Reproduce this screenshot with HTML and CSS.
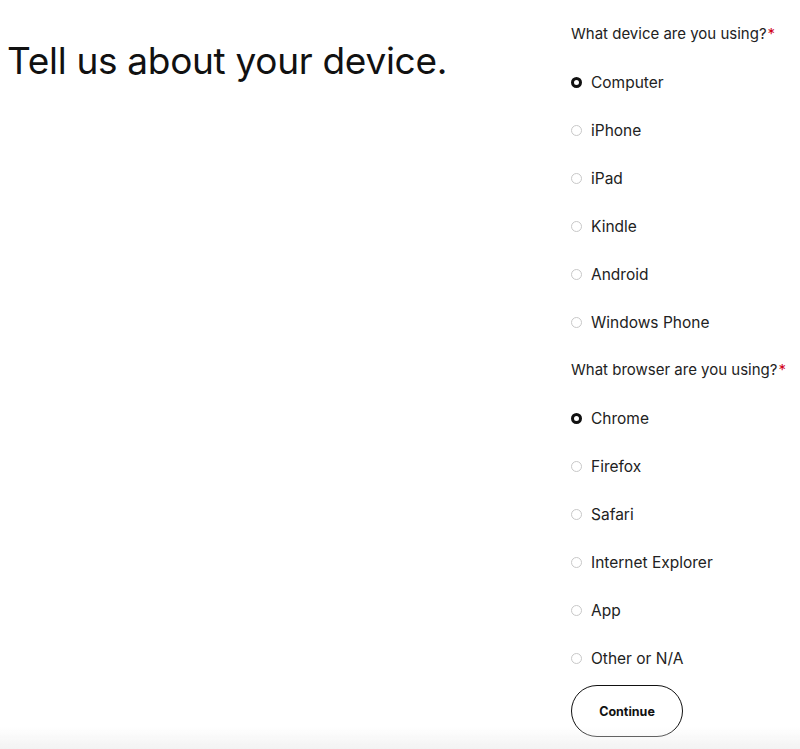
FILE: index.html
```html
<!DOCTYPE html>
<html>
<head>
<meta charset="utf-8">
<link rel="stylesheet" href="styles.css">
</head>
<body>
<main class="page">
  <h1 class="title">Tell us about your device.</h1>
  <form class="form">
    <div class="question">What device are you using?<span class="req">*</span></div>
    <label class="option"><span class="radio checked"></span>Computer</label>
    <label class="option"><span class="radio"></span>iPhone</label>
    <label class="option"><span class="radio"></span>iPad</label>
    <label class="option"><span class="radio"></span>Kindle</label>
    <label class="option"><span class="radio"></span>Android</label>
    <label class="option"><span class="radio"></span>Windows Phone</label>
    <div class="question">What browser are you using?<span class="req">*</span></div>
    <label class="option"><span class="radio checked"></span>Chrome</label>
    <label class="option"><span class="radio"></span>Firefox</label>
    <label class="option"><span class="radio"></span>Safari</label>
    <label class="option"><span class="radio"></span>Internet Explorer</label>
    <label class="option"><span class="radio"></span>App</label>
    <label class="option"><span class="radio"></span>Other or N/A</label>
    <button type="button" class="btn">Continue</button>
  </form>
</main>
<div class="footer-shade"></div>
</body>
</html>
```

FILE: styles.css
```css
html, body {
  margin: 0;
  padding: 0;
  background: #fff;
}
body {
  font-family: Inter, "Open Sans", sans-serif;
  color: #222;
  height: 749px;
  overflow: hidden;
}
.page {
  display: flex;
  align-items: flex-start;
}
.title {
  margin: 0;
  padding: 39px 0 0 7px;
  width: 571px;
  box-sizing: border-box;
  font-size: 37px;
  font-weight: 400;
  letter-spacing: -0.3px;
  line-height: 44px;
  color: #111;
}
.form {
  display: flex;
  flex-direction: column;
  align-items: flex-start;
  padding-top: 10px;
}
.question {
  height: 48px;
  line-height: 48px;
  font-size: 15px;
  color: #222;
}
.req {
  color: #d0011b;
  margin-left: 1px;
}
.option {
  display: flex;
  align-items: center;
  height: 48px;
  font-size: 15.5px;
  color: #222;
}
.radio {
  width: 11px;
  height: 11px;
  box-sizing: border-box;
  border: 1px solid #c8c8c8;
  border-radius: 50%;
  margin-right: 9px;
  background: #fff;
}
.radio.checked {
  border: 3.5px solid #111;
}
.btn {
  margin-top: 3px;
  width: 112px;
  height: 52px;
  border: 1.5px solid #111;
  border-radius: 26px;
  background: #fff;
  font-family: Inter, sans-serif;
  font-size: 12.5px;
  font-weight: 700;
  color: #111;
}
.footer-shade {
  position: fixed;
  left: 0;
  right: 0;
  bottom: 0;
  height: 22px;
  background: linear-gradient(to bottom, rgba(240,240,240,0), rgba(240,240,240,0.85));
  pointer-events: none;
}
```
